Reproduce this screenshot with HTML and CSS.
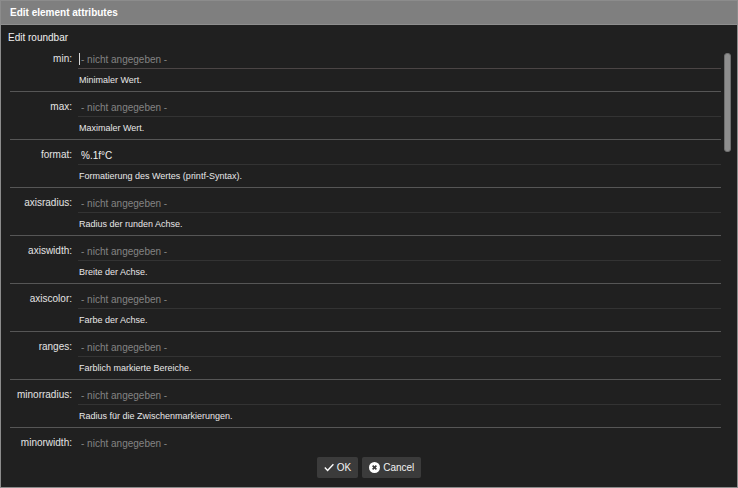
FILE: index.html
```html
<!DOCTYPE html>
<html lang="de">
  <head>
    <meta charset="utf-8" />
    <title>Edit element attributes</title>
    <link rel="stylesheet" href="styles.css">
  </head>
  <body>
    <div class="dialog">
      <div class="titlebar">Edit element attributes</div>
      <div class="content">
        <div class="subtitle">Edit roundbar</div>
        <div class="list-wrap">
          <div class="list">
            <div class="row">
              <label class="name">min:</label>
              <div class="field focused"><span class="caret"></span><input type="text" placeholder="- nicht angegeben -"></div>
              <div class="desc">Minimaler Wert.</div>
            </div>
            <div class="row">
              <label class="name">max:</label>
              <div class="field"><input type="text" placeholder="- nicht angegeben -"></div>
              <div class="desc">Maximaler Wert.</div>
            </div>
            <div class="row">
              <label class="name">format:</label>
              <div class="field"><input type="text" value="%.1f°C"></div>
              <div class="desc">Formatierung des Wertes (printf-Syntax).</div>
            </div>
            <div class="row">
              <label class="name">axisradius:</label>
              <div class="field"><input type="text" placeholder="- nicht angegeben -"></div>
              <div class="desc">Radius der runden Achse.</div>
            </div>
            <div class="row">
              <label class="name">axiswidth:</label>
              <div class="field"><input type="text" placeholder="- nicht angegeben -"></div>
              <div class="desc">Breite der Achse.</div>
            </div>
            <div class="row">
              <label class="name">axiscolor:</label>
              <div class="field"><input type="text" placeholder="- nicht angegeben -"></div>
              <div class="desc">Farbe der Achse.</div>
            </div>
            <div class="row">
              <label class="name">ranges:</label>
              <div class="field"><input type="text" placeholder="- nicht angegeben -"></div>
              <div class="desc">Farblich markierte Bereiche.</div>
            </div>
            <div class="row">
              <label class="name">minorradius:</label>
              <div class="field"><input type="text" placeholder="- nicht angegeben -"></div>
              <div class="desc">Radius für die Zwischenmarkierungen.</div>
            </div>
            <div class="row">
              <label class="name">minorwidth:</label>
              <div class="field"><input type="text" placeholder="- nicht angegeben -"></div>
              <div class="desc">Breite der Zwischenmarkierungen.</div>
            </div>
          </div>
          <div class="scroll-thumb"></div>
        </div>
        <div class="buttons">
          <button class="btn">
            <svg width="10" height="9" viewBox="0 0 10 9"><path d="M0.8 4.6 L3.6 7.5 L9.4 1.2" fill="none" stroke="#fff" stroke-width="1.4"/></svg>
            OK
          </button>
          <button class="btn">
            <svg width="11" height="11" viewBox="0 0 11 11"><circle cx="5.5" cy="5.5" r="5.5" fill="#fff"/><path d="M3.6 3.6 L7.4 7.4 M7.4 3.6 L3.6 7.4" stroke="#3a3a3a" stroke-width="1.6"/></svg>
            Cancel
          </button>
        </div>
      </div>
    </div>
  </body>
</html>
```

FILE: styles.css
```css
html, body {
  margin: 0;
  padding: 0;
  background: #202020;
}

body {
  font-family: "Liberation Sans", Arial, sans-serif;
  color: #e2e2e2;
}

.dialog {
  width: 738px;
  height: 488px;
  box-sizing: border-box;
  border: 1px solid #8c8c8c;
  display: flex;
  flex-direction: column;
  background: #202020;
}

.titlebar {
  height: 23px;
  line-height: 23px;
  background: #7f7f7f;
  border-bottom: 1px solid #8f8f8f;
  color: #fff;
  font-size: 10px;
  font-weight: bold;
  padding-left: 9px;
}

.content {
  flex: 1;
  display: flex;
  flex-direction: column;
  min-height: 0;
}

.subtitle {
  font-size: 10px;
  line-height: 13px;
  padding: 6px 0 0 7px;
  color: #f0f0f0;
}

.list-wrap {
  flex: 1;
  min-height: 0;
  position: relative;
  overflow: hidden;
}

.list {
  width: 711px;
  margin-left: 9px;
}

.row {
  display: grid;
  grid-template-columns: 62px 1fr;
  column-gap: 6px;
  padding: 5px 0 4px;
  border-bottom: 1px solid #565656;
}

.name {
  text-align: right;
  font-size: 10px;
  line-height: 20px;
  color: #e4e4e4;
}

.field {
  position: relative;
  height: 19px;
  border-bottom: 1px solid #333;
}
.field.focused {
  border-bottom-color: #4b4545;
}

.field input {
  width: 100%;
  height: 19px;
  box-sizing: border-box;
  border: 0;
  outline: none;
  background: transparent;
  padding: 0 0 0 3px;
  margin: 0;
  font-family: "Liberation Sans", Arial, sans-serif;
  font-size: 10px;
  color: #f0f0f0;
  caret-color: transparent;
}
.field input::placeholder {
  color: #838383;
}

.caret {
  position: absolute;
  left: 1px;
  top: 4px;
  width: 1px;
  height: 12px;
  background: #d8d8d8;
}

.desc {
  grid-column: 2;
  font-size: 9px;
  line-height: 14px;
  margin-top: 4px;
  padding-left: 1px;
  color: #e8e8e8;
}

.scroll-thumb {
  position: absolute;
  left: 723px;
  top: 9px;
  width: 5px;
  height: 97px;
  border-radius: 3px;
  background: #8e8e8e;
  border: 1px solid #6e6e6e;
}

.buttons {
  height: 38px;
  display: flex;
  justify-content: center;
  align-items: flex-start;
  gap: 4px;
  padding-top: 8px;
  box-sizing: border-box;
}

.btn {
  display: flex;
  align-items: center;
  gap: 3px;
  height: 21px;
  padding: 0 7px;
  border: 0;
  border-radius: 2px;
  background: #3b3b3b;
  color: #f2f2f2;
  font-family: "Liberation Sans", Arial, sans-serif;
  font-size: 10px;
}
```
